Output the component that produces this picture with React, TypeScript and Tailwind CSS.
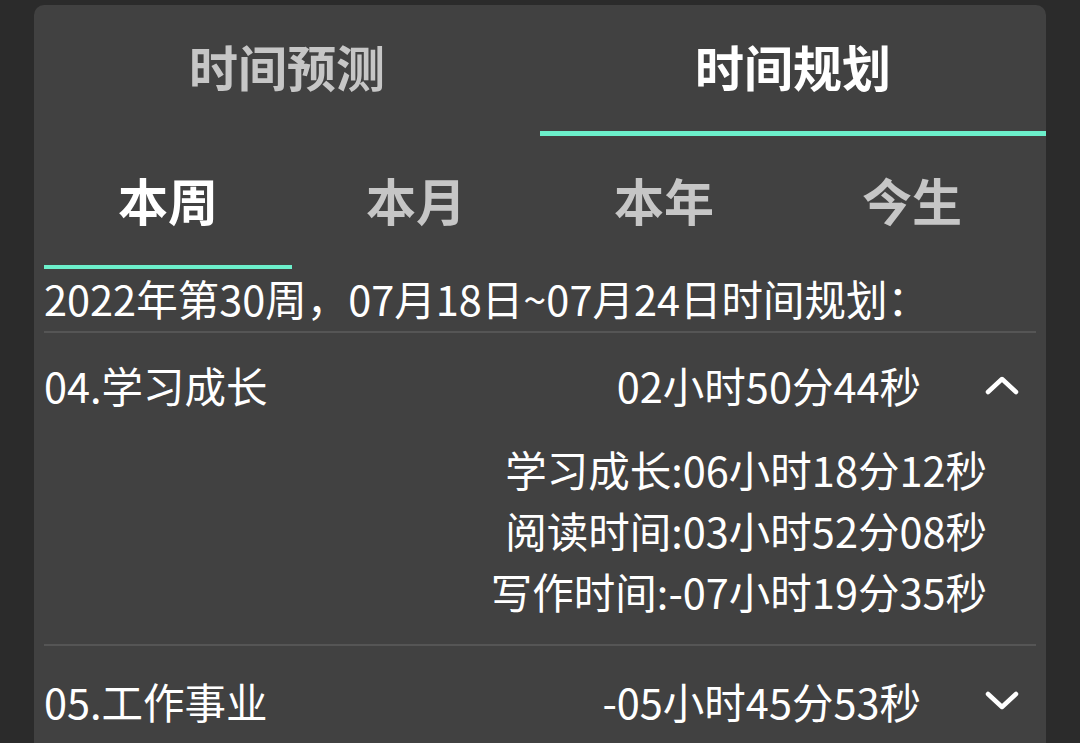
import React from 'react';

const font = { fontFamily: '"Noto Sans CJK SC", "Noto Sans", sans-serif' };

function Chevron({ up }: { up: boolean }) {
  return (
    <svg width="36" height="20" viewBox="0 0 36 20" className="shrink-0">
      <polyline
        points={up ? '4,17 18,4 32,17' : '4,3 18,16 32,3'}
        fill="none"
        stroke="#ffffff"
        strokeWidth="4.5"
        strokeLinecap="round"
        strokeLinejoin="round"
      />
    </svg>
  );
}

export default function App() {
  const periods = ['本周', '本月', '本年', '今生'];

  return (
    <div className="w-[1080px] h-[743px] overflow-hidden bg-[#2b2b2b] pt-[5px] px-[34px]" style={font}>
      <div className="h-full bg-[#414141] rounded-t-[10px] overflow-hidden">
        {/* main tabs */}
        <div className="grid grid-cols-2">
          <div className="flex flex-col">
            <div className="h-[126px] pb-[4px] flex items-center justify-center text-[49px] font-bold text-[#c6c6c6]">时间预测</div>
            <div className="h-[5px]"></div>
          </div>
          <div className="flex flex-col">
            <div className="h-[126px] pb-[4px] flex items-center justify-center text-[49px] font-bold text-white">时间规划</div>
            <div className="h-[5px] bg-[#6cf0cb]"></div>
          </div>
        </div>

        <div className="px-[10px]">
          {/* period tabs */}
          <div className="grid grid-cols-4">
            {periods.map((p, i) => (
              <div key={p} className="flex flex-col">
                <div
                  className={
                    'h-[129px] pb-[3px] flex items-center justify-center text-[50px] font-bold ' +
                    (i === 0 ? 'text-white' : 'text-[#c6c6c6]')
                  }
                >
                  {p}
                </div>
                <div className={'h-[4px] ' + (i === 0 ? 'bg-[#6cf0cb]' : '')}></div>
              </div>
            ))}
          </div>

          <div className="h-[62px] pb-[3px] flex items-center text-[41.5px] text-white whitespace-nowrap">
            2022年第30周，07月18日~07月24日时间规划：
          </div>
          <div className="h-[2px] bg-[#555555]"></div>

          {/* row 1 expanded */}
          <div className="h-[106px] pb-[2px] flex items-center text-[41.5px] text-white">
            <span className="flex-1">04.学习成长</span>
            <span>02小时50分44秒</span>
            <span className="w-[63px]"></span>
            <Chevron up={true} />
            <span className="w-[16px]"></span>
          </div>
          <div className="flex flex-col items-end pr-[49px] pb-[22px] text-[41.5px] text-white leading-[61px]">
            <div>学习成长:06小时18分12秒</div>
            <div>阅读时间:03小时52分08秒</div>
            <div>写作时间:-07小时19分35秒</div>
          </div>
          <div className="h-[2px] bg-[#555555]"></div>

          {/* row 2 collapsed */}
          <div className="h-[110px] flex items-center text-[41.5px] text-white">
            <span className="flex-1">05.工作事业</span>
            <span>-05小时45分53秒</span>
            <span className="w-[63px]"></span>
            <Chevron up={false} />
            <span className="w-[16px]"></span>
          </div>
        </div>
      </div>
    </div>
  );
}
